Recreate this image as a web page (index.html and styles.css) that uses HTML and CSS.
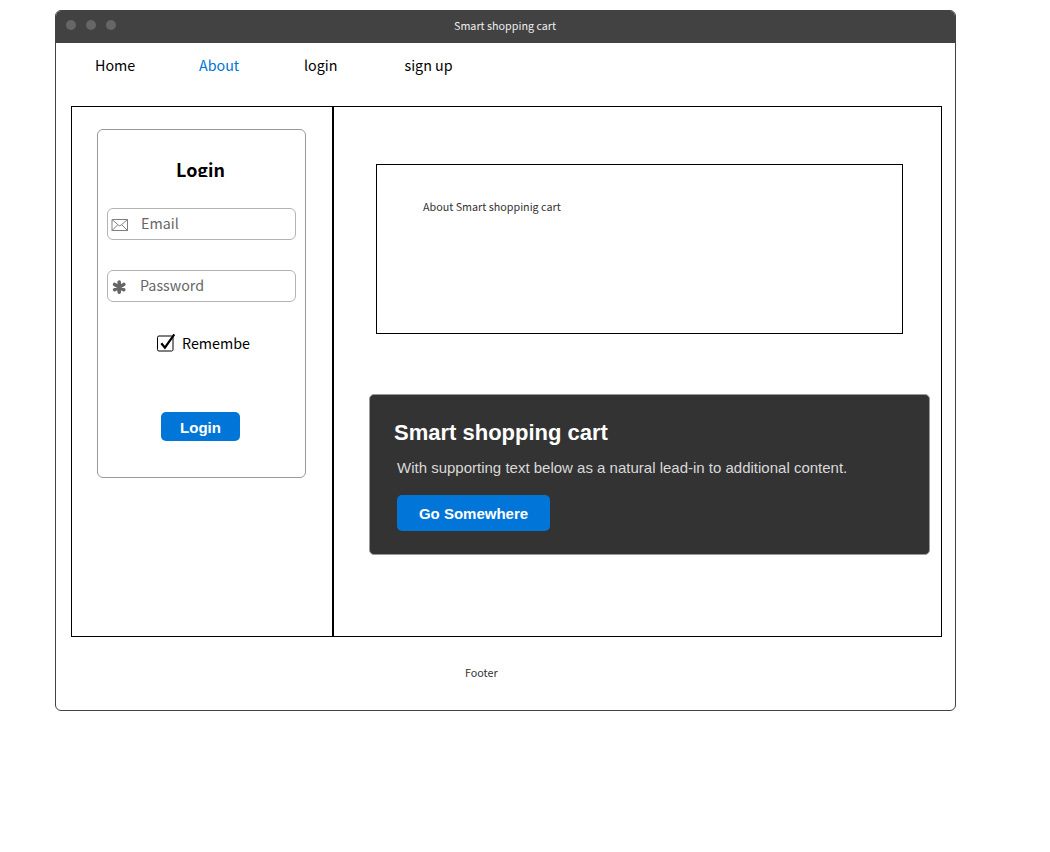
FILE: index.html
```html
<!DOCTYPE html>
<html lang="en">
<head>
<meta charset="utf-8">
<title>Smart shopping cart</title>
<link rel="stylesheet" href="styles.css">
</head>
<body>
<div class="window">
  <header class="titlebar">
    <div class="dots"><i class="dot"></i><i class="dot"></i><i class="dot"></i></div>
    <div class="caption">Smart shopping cart</div>
  </header>
  <nav class="nav">
    <a class="nav-link">Home</a>
    <a class="nav-link active">About</a>
    <a class="nav-link">login</a>
    <a class="nav-link">sign up</a>
  </nav>
  <main class="content">
    <section class="side">
      <form class="login">
        <h2 class="login-title">Login</h2>
        <div class="field email">
          <svg class="icon" width="18" height="14" viewBox="0 0 18 14" fill="none" stroke="#808080"><path d="M1 1.500h15.500v11h-15.500zM1 1.500l6.500 5.700q1.250 1.100 2.500 0l6.500-5.700M1 12.500l5.500-5.500M16.500 12.500l-5.500-5.500"/></svg>
          <span class="placeholder">Email</span>
        </div>
        <div class="field password">
          <svg class="icon" width="18" height="14" viewBox="0 0 18 14" stroke="#666" stroke-width="3.600" stroke-linecap="round"><path d="M8.200 2v10.200M3.600 4.500l9.200 5.200M12.800 4.500l-9.200 5.200"/></svg>
          <span class="placeholder">Password</span>
        </div>
        <div class="remember">
          <svg class="check" width="20" height="20" viewBox="0 0 20 20" fill="none" stroke="#000"><rect x="1.500" y="4" width="15.500" height="15" rx="1.500"/><path d="M5.300 11.300l3.600 4.300L18.300 2.300" stroke-width="2.200"/></svg>
          <span class="remember-text">Remembe</span>
        </div>
        <div class="btn login-btn">Login</div>
      </form>
    </section>
    <section class="main">
      <div class="about">About Smart shoppinig cart</div>
      <article class="card">
        <h1 class="card-title">Smart shopping cart</h1>
        <p class="card-text">With supporting text below as a natural lead-in to additional content.</p>
        <div class="btn card-btn">Go Somewhere</div>
      </article>
    </section>
  </main>
  <footer class="footer">Footer</footer>
</div>
</body>
</html>
```
FILE: styles.css
```css
* { box-sizing: border-box; }
body {
  margin: 0;
  padding: 10px 0 0 55px;
  background: #fff;
  color: #000;
  font-family: "Noto Sans CJK SC", "Noto Sans", sans-serif;
}
h1, h2, p { margin: 0; }
.window {
  width: 901px;
  height: 701px;
  border: 1px solid #424242;
  border-radius: 6px;
  overflow: hidden;
}
.titlebar {
  display: grid;
  grid-template-columns: 390px 120px 1fr;
  align-items: center;
  height: 32px;
  background: #424242;
}
.dots { display: flex; gap: 10px; padding: 0 0 4px 10.4px; }
.dot { width: 10px; height: 10px; border-radius: 50%; background: #666; }
.caption {
  padding: 0 0 2px 8px;
  color: #eee;
  font-size: 10.75px;
  line-height: 16px;
  white-space: nowrap;
}
.nav {
  display: grid;
  grid-template-columns: 104px 105px 100.5px 1fr;
  height: 63px;
  padding: 10px 0 0 39px;
  font-size: 14.3px;
  line-height: 23px;
}
.nav-link.active { color: #0275d8; }
.content { display: flex; width: 871px; height: 531px; margin-left: 15px; }
.side { width: 262px; padding: 22px 0 0 25px; border: 1px solid #000; }
.login {
  width: 209px;
  height: 349px;
  padding: 28px 9px 0;
  border: 1px solid #999;
  border-radius: 6px;
}
.login-title {
  height: 19px;
  overflow: hidden;
  text-align: center;
  font-size: 17.9px;
  line-height: 23px;
  padding-right: 2px;
}
.field {
  display: flex;
  align-items: center;
  gap: 12px;
  width: 189px;
  height: 32px;
  padding-left: 3px;
  border: 1px solid #b3b3b3;
  border-radius: 6px;
  color: #666;
  font-size: 14.3px;
  line-height: 28px;
}
.email { margin-top: 31px; }
.password { margin-top: 30px; }
.password .placeholder { margin-left: -1px; }
.icon { margin-top: 2px; }
.placeholder { padding-bottom: 3px; }
.remember {
  display: flex;
  gap: 6px;
  height: 22px;
  margin: 30px 0 0 49px;
  font-size: 14.3px;
  line-height: 21px;
}
.btn {
  border-radius: 5px;
  background: #0275d8;
  color: #fff;
  text-align: center;
  font: bold 15px "Liberation Sans", Arial, sans-serif;
}
.login-btn { width: 79px; height: 29px; margin: 58px 0 0 54px; line-height: 31px; }
.main { width: 609px; padding: 57px 0 0 42px; border: 1px solid #000; }
.about {
  width: 527px;
  height: 170px;
  padding: 34px 0 0 46px;
  border: 1px solid #000;
  color: #333;
  font-size: 10.75px;
  line-height: 16px;
}
.card {
  width: 561px;
  height: 161px;
  margin: 60px 0 0 -7px;
  padding: 24px 0 0 24px;
  border: 1px solid #999;
  border-radius: 5px;
  background: #333;
  font-family: "Liberation Sans", Arial, sans-serif;
}
.card-title { color: #fff; font-size: 22px; line-height: 28px; }
.card-text { margin: 10px 0 0 3px; color: #d9d9d9; font-size: 15px; line-height: 22px; }
.card-btn { width: 153px; height: 36px; margin: 16px 0 0 3px; line-height: 38px; }
.footer { padding: 28px 0 0 409px; color: #333; font-size: 10.75px; line-height: 16px; }
```
